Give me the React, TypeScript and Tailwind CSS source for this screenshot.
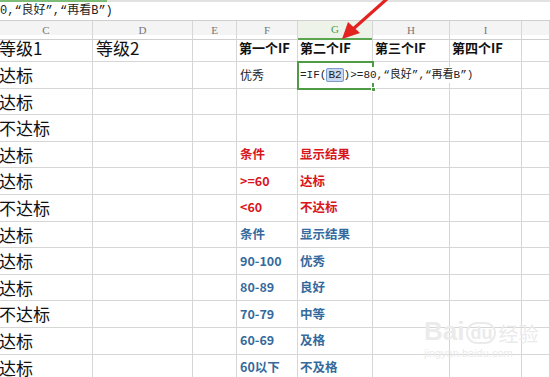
import React from "react";

const cols = "grid grid-cols-[93px_100px_44px_61px_75px_77px_72px_28px]";
const cjk = { fontFamily: '"Noto Sans CJK SC", "Liberation Sans", sans-serif' };

type Row = { c: string; f?: string; g?: string; tone?: "red" | "blue" | "plain" };

const rows: Row[] = [
  { c: "达标", f: "优秀", tone: "plain" },
  { c: "达标" },
  { c: "不达标" },
  { c: "达标", f: "条件", g: "显示结果", tone: "red" },
  { c: "达标", f: ">=60", g: "达标", tone: "red" },
  { c: "不达标", f: "<60", g: "不达标", tone: "red" },
  { c: "达标", f: "条件", g: "显示结果", tone: "blue" },
  { c: "达标", f: "90-100", g: "优秀", tone: "blue" },
  { c: "达标", f: "80-89", g: "良好", tone: "blue" },
  { c: "不达标", f: "70-79", g: "中等", tone: "blue" },
  { c: "达标", f: "60-69", g: "及格", tone: "blue" },
  { c: "达标", f: "60以下", g: "不及格", tone: "blue" },
];

const toneClass = {
  red: "text-[#d8161c] font-bold text-[12.5px]",
  blue: "text-[#356a9c] font-bold text-[12.5px]",
  plain: "text-[#222] text-[12px]",
};

function Cell({ children, className = "" }: { children?: React.ReactNode; className?: string }) {
  return (
    <div className={"border-r border-b border-[#d6d6d6] flex items-center overflow-visible whitespace-nowrap " + className}>
      {children}
    </div>
  );
}

export default function App() {
  const letters = ["C", "D", "E", "F", "G", "H", "I", ""];
  return (
    <div className="relative w-[550px] h-[377px] overflow-hidden bg-white" style={cjk}>
      {/* top strip */}
      <div className="flex h-[2px]">
        <div className="w-[107px] bg-[#7dbb78]" />
        <div className="flex-1 bg-[#e2e2e2]" />
      </div>

      {/* formula bar */}
      <div className="h-[19px] border-b border-[#cfcfcf] flex items-center text-[12px] text-[#222] pl-0">
        <span style={{ fontFamily: '"Liberation Mono", "Noto Sans CJK SC", monospace' }}>0,“良好”,“再看B”)</span>
      </div>

      {/* column header */}
      <div className={cols + " h-[14px] bg-[#f4f4f4]"}>
        {letters.map((l, i) => (
          <div
            key={i}
            className={
              "flex items-center justify-center text-[11px] border-r border-[#d6d6d6] " +
              (l === "G" ? "text-[#4b9a3f] border-b-2 border-b-[#5aa54e] bg-[#eef3ea]" : "text-[#777] border-b border-b-[#cfcfcf]")
            }
            style={{ fontFamily: '"Liberation Serif", serif' }}
          >
            {l}
          </div>
        ))}
      </div>

      {/* header row */}
      <div className={cols + " h-[27px]"}>
        <Cell className="text-[17px] text-[#111] -ml-[1px]">等级1</Cell>
        <Cell className="text-[17px] text-[#111] pl-[3px]">等级2</Cell>
        <Cell />
        <Cell className="pl-[2px] text-[13px] font-bold text-[#111]">第一个IF</Cell>
        <Cell className="pl-[2px] text-[13px] font-bold text-[#111]">第二个IF</Cell>
        <Cell className="pl-[2px] text-[13px] font-bold text-[#111]">第三个IF</Cell>
        <Cell className="pl-[2px] text-[13px] font-bold text-[#111]">第四个IF</Cell>
        <Cell />
      </div>

      {rows.map((r, i) => (
        <div key={i} className={cols + " h-[26.6px]"}>
          <Cell className="text-[17px] text-[#111] -ml-[1px]">{r.c}</Cell>
          <Cell />
          <Cell />
          <Cell className={"pl-[3px] " + (r.tone ? toneClass[r.tone] : "")}>{r.f}</Cell>
          <Cell className={"pl-[2px] " + (r.tone ? toneClass[r.tone] : "")}>
            {i === 0 ? (
              <span
                className="relative z-20 text-[11px] text-[#222] bg-white"
                style={{ fontFamily: '"Liberation Mono", "Noto Sans CJK SC", monospace' }}
              >
                =IF(<span className="bg-[#c9d8ee] border border-[#7d9bcb] rounded-[2px] px-[1px]">B2</span>)&gt;=80,“良好”,“再看B”)
              </span>
            ) : (
              r.g
            )}
          </Cell>
          <Cell />
          <Cell />
          <Cell />
        </div>
      ))}

      {/* selection box on G2 */}
      <div className="absolute z-10 left-[297px] top-[61px] w-[77px] h-[29px] border-2 border-[#4f9a44] pointer-events-none" />
      <div className="absolute z-10 left-[371px] top-[87px] w-[5px] h-[5px] bg-[#4f9a44] border border-white" />

      {/* watermark */}
      <div className="absolute left-[424px] top-[318px] flex flex-col items-start text-[#ebebeb] pointer-events-none">
        <div className="flex items-end gap-[2px]">
          <span className="text-[26px] leading-none font-bold" style={{ fontFamily: '"Liberation Sans", sans-serif' }}>Bai</span>
          <span className="text-[18px] leading-none font-bold border-2 border-[#ebebeb] rounded-full px-[2px]" style={{ fontFamily: '"Liberation Sans", sans-serif' }}>du</span>
          <span className="text-[20px] leading-none">经验</span>
        </div>
        <span className="text-[11px] leading-none mt-[4px]" style={{ fontFamily: '"Liberation Sans", sans-serif' }}>jingyan.baidu.com</span>
      </div>

      {/* red arrow */}
      <svg className="absolute z-30 left-0 top-0 pointer-events-none" width="550" height="60">
        <line x1="388" y1="-2" x2="352" y2="30" stroke="#e3231f" strokeWidth="3.2" strokeLinecap="round" />
        <polygon points="342,39 348,22 360,33" fill="#e3231f" />
      </svg>
    </div>
  );
}
